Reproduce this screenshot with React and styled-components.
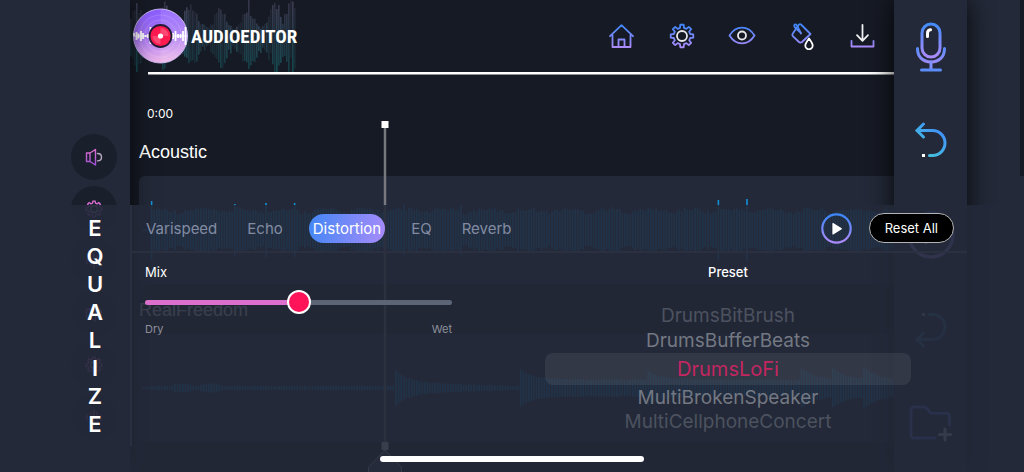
import React, { useState } from 'react';
import styled, { createGlobalStyle } from 'styled-components';

const GlobalStyle = createGlobalStyle`
  body {
    margin: 0;
    background: #161a24;
    color: #ffffff;
    font-family: Inter, "Open Sans", sans-serif;
  }

  * {
    box-sizing: border-box;
  }

  button {
    border: none;
    padding: 0;
    background: none;
    color: inherit;
    font-family: inherit;
    cursor: pointer;
  }
`;

/* Layout */
const Screen = styled.div`
  position: relative;
  display: grid;
  grid-template-columns: 130px 1fr 73px 53px 4px;
  min-height: 100vh;
  overflow: hidden;
`;

const TrackRail = styled.aside`
  display: flex;
  flex-direction: column;
  align-items: center;
  gap: 6px;
  padding: 134px 0 0 57px;
  background: #232938;
  box-shadow: 0 0 22px rgba(0, 0, 0, 0.7);
  z-index: 1;
`;

const Editor = styled.main`
  position: relative;
  min-width: 0;
  background: #161a24;
`;

const ToolRail = styled.aside`
  display: flex;
  flex-direction: column;
  background: #232938;
  box-shadow: 0 0 26px rgba(0, 0, 0, 0.85);
  z-index: 1;
`;

const Gutter = styled.div`
  background: #232938;
`;

const NextPage = styled.div`
  background: linear-gradient(#161a24 176px, #232938 176px);
`;

/* Header */
const Header = styled.header`
  display: flex;
  justify-content: space-between;
  height: 72px;
  padding-right: 18px;
`;

const Logo = styled.a`
  position: relative;
  display: flex;
  align-items: center;
  width: 170px;
  gap: 3px;
  padding-left: 3px;
  color: #ffffff;
  text-decoration: none;
`;

const LogoWave = styled.svg`
  position: absolute;
  top: 0;
  left: 0;
`;

const Disc = styled.svg`
  position: relative;
  flex: none;
`;

const LogoText = styled.span`
  position: relative;
  font-family: "Liberation Sans Narrow", "Roboto Condensed", sans-serif;
  font-size: 19px;
  font-weight: 700;
`;

const Actions = styled.nav`
  display: flex;
  align-items: center;
  gap: 32px;
`;

const IconButton = styled.button`
  display: flex;
  align-items: center;
  justify-content: center;
`;

const RoundButton = styled(IconButton)`
  width: 46px;
  height: 46px;
  flex: none;
  border-radius: 50%;
  background: #1a1f2c;
`;

const ToolButton = styled(IconButton)`
  height: 94px;
  flex: none;
`;

const Rule = styled.div`
  height: 3px;
  margin-left: 18px;
  background: #ffffff;
  border-bottom: 1px solid #8c8f94;
`;

/* Tracks */
const Time = styled.div`
  padding: 29px 0 0 17px;
  font-size: 12px;
  line-height: 20px;
`;

const Tracks = styled.div`
  display: flex;
  flex-direction: column;
  gap: 14px;
  padding: 16px 0 0 9px;
`;

const TrackName = styled.h2`
  margin: 0 0 12px;
  font-family: "Liberation Sans", Arial, sans-serif;
  font-size: 18px;
  font-weight: 400;
  line-height: 24px;
`;

const Clip = styled.div`
  height: 108px;
  border-radius: 6px 0 0 6px;
  background: #232938;
  overflow: hidden;
`;

const Playhead = styled.svg`
  position: absolute;
  top: 120px;
  left: 235px;
`;

/* Equalizer sheet */
const Sheet = styled.section`
  position: absolute;
  inset: 205px 0 0;
  display: grid;
  grid-template-columns: 130px 1fr 57px;
  padding-bottom: 26px;
  background: rgba(35, 41, 56, 0.9);
  z-index: 2;
`;

const SheetTitle = styled.h1`
  display: flex;
  flex-direction: column;
  align-items: center;
  margin: 0;
  padding: 9px 0 0 60px;
  font-size: 22px;
  font-weight: 600;
  line-height: 28px;
`;

const SheetBody = styled.div`
  border-left: 2px solid #292f3f;
`;

const Toolbar = styled.div`
  display: flex;
  align-items: center;
  height: 48px;
  padding: 0 13px 0 10px;
  border-bottom: 2px solid #2a3040;
`;

const Tabs = styled.div`
  display: flex;
  flex: 1;
  gap: 22px;
`;

const Tab = styled.button`
  height: 29px;
  padding: 0 4px;
  border-radius: 15px;
  font-size: 15px;
  color: ${({ $active }) => ($active ? '#ffffff' : '#838ba3')};
  background: ${({ $active }) =>
    $active ? 'linear-gradient(100deg, #4287f5, #a78bfa)' : 'none'};
`;

const PlayButton = styled(IconButton)`
  margin-right: 17px;
`;

const ResetButton = styled.button`
  height: 30px;
  padding: 0 15px;
  border: 1px solid #b4b4b4;
  border-radius: 15px;
  background: #000000;
  font-size: 13px;
`;

const Controls = styled.div`
  display: grid;
  grid-template-columns: 307fr 366fr;
  gap: 93px;
  padding: 9px 56px 0 13px;
`;

const Label = styled.label`
  display: block;
  font-size: 13px;
  line-height: 20px;
`;

const Slider = styled.input`
  display: block;
  width: 100%;
  height: 24px;
  margin: 8px 0 6px;
  appearance: none;
  background: transparent;

  &::-webkit-slider-runnable-track {
    height: 5px;
    border-radius: 3px;
    background: linear-gradient(
      to right,
      #de70cd ${({ value }) => value}%,
      #5b6575 ${({ value }) => value}%
    );
  }

  &::-webkit-slider-thumb {
    appearance: none;
    width: 24px;
    height: 24px;
    margin-top: -10px;
    border: 2px solid #ffffff;
    border-radius: 50%;
    background: #ff1459;
  }
`;

const Range = styled.div`
  display: flex;
  justify-content: space-between;
  font-size: 11px;
  line-height: 18px;
  color: #8d909a;
`;

const Picker = styled.fieldset`
  display: flex;
  flex-direction: column;
  min-width: 0;
  margin: 0;
  padding: 0;
  border: none;
  text-align: center;
`;

const Legend = styled.legend`
  width: 100%;
  margin-bottom: 22px;
  padding: 0;
  font-size: 13px;
  font-weight: 500;
  line-height: 20px;
`;

const levels = {
  far: { color: '#4c525f', size: 19, height: 24 },
  near: { color: '#737883', size: 19, height: 25 },
  picked: { color: '#c32660', size: 20, height: 32 }
};

const Option = styled.label`
  height: ${({ $level }) => levels[$level].height}px;
  border-radius: 8px;
  font-size: ${({ $level }) => levels[$level].size}px;
  line-height: ${({ $level }) => levels[$level].height}px;
  color: ${({ $level }) => levels[$level].color};
  background: ${({ $level }) => ($level === 'picked' ? 'rgba(255, 255, 255, 0.07)' : 'none')};

  input {
    appearance: none;
    width: 0;
    height: 0;
    margin: 0;
  }
`;

const HomeBar = styled.div`
  position: absolute;
  bottom: 10px;
  left: 50%;
  width: 264px;
  height: 6px;
  margin-left: -132px;
  border-radius: 3px;
  background: #ffffff;
  z-index: 3;
`;

const Hidden = styled.svg`
  position: absolute;
`;

/* Drawings */
const Gradients = () => (
  <Hidden width="0" height="0" aria-hidden="true">
    <defs>
      <linearGradient id="cool" gradientUnits="userSpaceOnUse" x1="0" y1="3" x2="0" y2="25">
        <stop offset="0" stopColor="#3f86f8" />
        <stop offset="1" stopColor="#ab8bfb" />
      </linearGradient>
      <linearGradient id="mic" gradientUnits="userSpaceOnUse" x1="0" y1="2" x2="0" y2="44">
        <stop offset="0" stopColor="#3f8cfa" />
        <stop offset="0.8" stopColor="#ab8bfb" />
        <stop offset="1" stopColor="#8190fa" />
      </linearGradient>
      <linearGradient id="arms" gradientUnits="userSpaceOnUse" x1="0" y1="24" x2="0" y2="44">
        <stop offset="0" stopColor="#4a8cfa" />
        <stop offset="1" stopColor="#a58bfb" />
      </linearGradient>
      <linearGradient id="sea" gradientUnits="userSpaceOnUse" x1="30" y1="8" x2="8" y2="34">
        <stop offset="0" stopColor="#418dfb" />
        <stop offset="1" stopColor="#45c8d8" />
      </linearGradient>
      <linearGradient id="pink" gradientUnits="userSpaceOnUse" x1="0" y1="1" x2="0" y2="17">
        <stop offset="0" stopColor="#e070d0" />
        <stop offset="1" stopColor="#a050d8" />
      </linearGradient>
      <linearGradient id="disc" x1="0.4" y1="0" x2="0.5" y2="1">
        <stop offset="0" stopColor="#8a5cff" />
        <stop offset="0.5" stopColor="#a878f5" />
        <stop offset="1" stopColor="#f0b8e8" />
      </linearGradient>
      <linearGradient id="teal" gradientUnits="userSpaceOnUse" x1="0" y1="0" x2="0" y2="72">
        <stop offset="0" stopColor="#4a4560" />
        <stop offset="0.5" stopColor="#2c4656" />
        <stop offset="1" stopColor="#12575c" />
      </linearGradient>
    </defs>
  </Hidden>
);

const Icon = ({ size = 28, box = 28, stroke = 'url(#cool)', width = 1.8, children }) => (
  <svg
    width={size}
    height={size}
    viewBox={`0 0 ${box} ${box}`}
    fill="none"
    stroke={stroke}
    strokeWidth={width}
    strokeLinejoin="round"
    strokeLinecap="round"
    aria-hidden="true"
  >
    {children}
  </svg>
);

const gearPath = (c, outer, inner) => {
  const points = [];
  for (let i = 0; i < 8; i++) {
    [
      [-0.24, inner],
      [-0.15, outer],
      [0.15, outer],
      [0.24, inner]
    ].forEach(([offset, r]) => {
      const a = (i * Math.PI) / 4 + offset;
      points.push(`${(c + r * Math.sin(a)).toFixed(2)} ${(c - r * Math.cos(a)).toFixed(2)}`);
    });
  }
  return `M${points.join('L')}Z`;
};

const HomeIcon = () => (
  <Icon>
    <path d="M2 14.2 13.500 3.200l11.500 11M4.500 13v12h18V13M10.500 25v-7.500h6V25" />
  </Icon>
);

const GearIcon = () => (
  <Icon>
    <path d={gearPath(14, 11.400, 8.400)} />
    <circle cx="14" cy="14" r="5" stroke="#e8e8ec" />
  </Icon>
);

const EyeIcon = () => (
  <Icon>
    <path d="M1.500 13.500C8 3 20 3 26.500 13.500 20 24 8 24 1.500 13.500Z" />
    <circle cx="14" cy="13.500" r="4" stroke="#e8e8ec" />
  </Icon>
);

const FillIcon = () => (
  <Icon>
    <path d="M11 2.500q1-.8 2 0L22.500 12 14 20q-1.500 1.200-3 0L4.800 14.200Q3.800 12.800 4.800 11.500Z" />
    <path d="M13 11.500 9 3.500Q7.500 1.500 6.300 3 5.800 4.200 7 5.500L13 11" />
    <path d="M21 16.500q3.700 5 3.700 7.100a3.700 3.700 0 0 1-7.400 0q0-2.100 3.700-7.100Z" stroke="#ffffff" />
  </Icon>
);

const DownloadIcon = () => (
  <Icon>
    <path d="M3.500 18.800v5.700h22v-5.700" />
    <path d="M14.500 3v15.500M9 13.200l5.500 5.600 5.500-5.600" stroke="#f0f0f2" />
  </Icon>
);

const MicIcon = () => (
  <svg width="32" height="52" viewBox="0 0 32 52" fill="none" strokeWidth="3" strokeLinecap="round">
    <rect x="7" y="3" width="18" height="33" rx="9" stroke="url(#mic)" />
    <path d="M2.500 27.500C2.500 36 8 41 16 41s13.500-5 13.500-13.500" stroke="url(#arms)" />
    <path d="M16 41v7" stroke="#8190fa" />
    <path d="M6.500 49h19" stroke="#5b8cfa" />
    <path d="M12.500 15.500v-3q0-3.500 3-3.700" stroke="#ffffff" />
  </svg>
);

const UndoIcon = ({ flip }) => (
  <svg width="36" height="40" viewBox="0 0 36 40" fill="none" strokeWidth="3" strokeLinecap="round">
    <g transform={flip ? 'translate(0 40) scale(1 -1)' : undefined} opacity={flip ? 0.6 : 1}>
      <path
        d="M10.500 3 4 9.500l6.500 6.500M4 9.500h15.500a12.500 12.500 0 0 1 0 25H16.500"
        stroke="url(#sea)"
      />
      <rect x="9" y="33" width="3" height="3" fill="#ffffff" />
    </g>
  </svg>
);

const FolderIcon = () => (
  <Icon size={44} box={44} width={3}>
    <path
      d="M26 37H5q-3 0-3-3V9q0-3 3-3h10q2 0 3.500 2l2 3q1 1.200 3 1.200h14q3 0 3 3v9"
      stroke="#5070e8"
    />
    <path d="M36 28v11M30.500 33.500h11" stroke="#d8d8e0" />
  </Icon>
);

const PlayIcon = ({ size = 31, fill = '#ffffff' }) => (
  <Icon size={size} width={2}>
    <circle cx="14" cy="14" r="12.800" />
    <path d="M10.800 9.500v9.400l7.600-4.700Z" fill={fill} stroke={fill} strokeWidth="1" />
  </Icon>
);

const SpeakerIcon = () => (
  <Icon size={18} box={18} stroke="url(#pink)" width={1.4}>
    <path d="M1.500 5h3.500v8.500H1.500ZM5 5l5.500-3.500v15.500L5 13.500" />
    <path d="M12.500 5.500q4 0 4 3.700t-4 3.700" stroke="#b9a9bf" />
  </Icon>
);

const SmallGearIcon = () => (
  <Icon size={18} box={18} stroke="url(#pink)" width={1.3}>
    <path d={gearPath(9, 8, 6)} />
    <circle cx="9" cy="9" r="3.400" stroke="#b9a9bf" />
  </Icon>
);

const LevelsIcon = () => (
  <Icon size={18} box={18} stroke="url(#pink)" width={1.3}>
    <path d="M2 7v5M6 4v10M12 4v10M16 7v5" />
    <path d="M9 2v14" stroke="#b9a9bf" />
  </Icon>
);

const noise = i => Math.abs((Math.sin(i * 12.9898) * 43758.5453) % 1);

// tall bars of the first clip, by x
const peaks = { 12: 29, 96: 26, 125: 27, 154: 27, 265: 25, 322: 25, 578: 30, 607: 31 };

const drumLevel = (x, i) => {
  const near = Object.keys(peaks).find(p => Math.abs(p - x) < 1.3);
  if (near) return peaks[near];
  return 15 + 4 * Math.abs(Math.sin(x / 13)) + 4 * noise(i);
};

// hits of the second clip: start, height, level it falls to
const hits = [
  [256, 17, 5],
  [381, 18, 8],
  [506, 18, 8],
  [661, 20, 8],
  [693, 19, 8],
  [724, 20, 8]
];

const hitLevel = (x, i) => {
  const hit = hits.filter(h => h[0] <= x).pop();
  if (!hit) return 1 + (x > 25 && x < 85 ? 3 * Math.abs(Math.sin(x / 9)) : 0.5) + noise(i);
  const [start, height, floor] = hit;
  const fade = floor - (start === 256 ? (x - start) / 35 : 0);
  return Math.max(1.5, fade) + (height - floor) * Math.exp((start - x) / 13) + noise(i);
};

const Wave = ({ level }) => {
  const bars = [];
  for (let i = 0; i < 700; i++) {
    const x = 4 + i * 2.6;
    const h = x < 11 ? 1 : level(x, i);
    bars.push(<rect key={i} x={x.toFixed(1)} y={54 - h} width="1.6" height={h * 2} />);
  }
  return (
    <svg width="100%" height="108" fill="#128fd6" aria-hidden="true">
      {bars}
    </svg>
  );
};

// places where the wave behind the logo swells
const swells = [6, 34, 60, 90, 118, 145, 160];

const LogoMark = () => {
  const bars = [];
  for (let i = 0; i < 83; i++) {
    const x = i * 2;
    const swell = Math.max(...swells.map(s => Math.exp(-Math.pow((x - s) / 7, 2))));
    const up = 6 + swell * (14 + 16 * noise(i + 3)) + 5 * noise(i);
    const down = 8 + swell * (10 + 14 * noise(i + 21)) + 9 * noise(i + 40);
    bars.push(
      <rect key={i} x={x} y={36 - up} width="1.6" height={up + down} opacity={0.25 + 0.65 * noise(i + 9)} />
    );
  }
  return (
    <>
      <LogoWave width="168" height="72" fill="url(#teal)" aria-hidden="true">
        {bars}
      </LogoWave>
      <Disc width="55" height="56" viewBox="0 0 55 56" aria-hidden="true">
        <circle cx="27.5" cy="28" r="27" fill="url(#disc)" stroke="#c9b3f2" />
        <path d="M27.5 1a27 27 0 0 1 0 54Z" fill="#ffffff" opacity="0.12" />
        <circle cx="27.5" cy="28" r="21" fill="none" stroke="#ffffff" opacity="0.15" />
        <circle cx="27.5" cy="28" r="16" fill="none" stroke="#ffffff" opacity="0.15" />
        <path
          d="M1 28v-3M3.500 24v8M5.500 25.500v5M8 23v10M10 25v6M12.500 27v2M15 26v4M17.500 19v17M40 25v6M42.500 23v10M45 26v4M47.500 26v4M50 23v10M52.500 19v18"
          stroke="#ffffff"
          strokeWidth="1.8"
        />
        <path d="M1 28h53" stroke="#ffffff" />
        <circle cx="27.5" cy="28" r="11" fill="#ff1a50" stroke="#241b38" strokeWidth="1.8" />
        <path
          d="M27.500 28V20a8 8 0 0 1 8 8ZM27.500 28v8a8 8 0 0 1-8-8Z"
          fill="#ffffff"
          opacity="0.2"
        />
        <circle cx="27.5" cy="28" r="2.6" fill="#ffffff" />
      </Disc>
    </>
  );
};

const actions = [
  { name: 'Home', Glyph: HomeIcon },
  { name: 'Settings', Glyph: GearIcon },
  { name: 'Preview', Glyph: EyeIcon },
  { name: 'Color', Glyph: FillIcon },
  { name: 'Download', Glyph: DownloadIcon }
];

const tracks = [
  { name: 'Acoustic', level: drumLevel },
  { name: 'RealFreedom', level: hitLevel }
];

const tabs = ['Varispeed', 'Echo', 'Distortion', 'EQ', 'Reverb'];

const presets = [
  'DrumsBitBrush',
  'DrumsBufferBeats',
  'DrumsLoFi',
  'MultiBrokenSpeaker',
  'MultiCellphoneConcert'
];

const Equalizer = () => {
  const [tab, setTab] = useState('Distortion');
  const [mix, setMix] = useState(50);
  const [preset, setPreset] = useState(2);

  const levelOf = i => ['picked', 'near'][Math.abs(i - preset)] || 'far';

  return (
    <Sheet>
      <SheetTitle>
        {'EQUALIZE'.split('').map((letter, i) => (
          <span key={i}>{letter}</span>
        ))}
      </SheetTitle>
      <SheetBody>
        <Toolbar>
          <Tabs role="tablist">
            {tabs.map(name => (
              <Tab
                key={name}
                role="tab"
                aria-selected={name === tab}
                $active={name === tab}
                onClick={() => setTab(name)}
              >
                {name}
              </Tab>
            ))}
          </Tabs>
          <PlayButton aria-label="Play">
            <PlayIcon />
          </PlayButton>
          <ResetButton onClick={() => setMix(50)}>Reset All</ResetButton>
        </Toolbar>
        <Controls>
          <div>
            <Label htmlFor="mix">Mix</Label>
            <Slider
              id="mix"
              type="range"
              value={mix}
              onChange={e => setMix(Number(e.target.value))}
            />
            <Range>
              <span>Dry</span>
              <span>Wet</span>
            </Range>
          </div>
          <Picker>
            <Legend>Preset</Legend>
            {presets.map((name, i) => (
              <Option key={name} $level={levelOf(i)}>
                <input
                  type="radio"
                  name="preset"
                  checked={i === preset}
                  onChange={() => setPreset(i)}
                />
                {name}
              </Option>
            ))}
          </Picker>
        </Controls>
      </SheetBody>
    </Sheet>
  );
};

const App = () => (
  <>
    <GlobalStyle />
    <Gradients />
    <Screen>
      <TrackRail>
        {tracks.map(({ name }) => (
          <React.Fragment key={name}>
            <RoundButton aria-label={`${name} volume`}>
              <SpeakerIcon />
            </RoundButton>
            <RoundButton aria-label={`${name} settings`}>
              <SmallGearIcon />
            </RoundButton>
            <RoundButton aria-label={`${name} levels`}>
              <LevelsIcon />
            </RoundButton>
          </React.Fragment>
        ))}
      </TrackRail>
      <Editor>
        <Header>
          <Logo href="#">
            <LogoMark />
            <LogoText>AUDIOEDITOR</LogoText>
          </Logo>
          <Actions>
            {actions.map(({ name, Glyph }) => (
              <IconButton key={name} aria-label={name}>
                <Glyph />
              </IconButton>
            ))}
          </Actions>
        </Header>
        <Rule />
        <Time>0:00</Time>
        <Tracks>
          {tracks.map(({ name, level }) => (
            <div key={name}>
              <TrackName>{name}</TrackName>
              <Clip>
                <Wave level={level} />
              </Clip>
            </div>
          ))}
        </Tracks>
        <Playhead width="40" height="352" viewBox="0 0 40 352" aria-hidden="true">
          <path d="M20 4v322" stroke="#77797f" strokeWidth="2.5" />
          <rect x="16.5" y="1" width="7" height="7" fill="#ffffff" />
          <rect x="16.5" y="322" width="7" height="8" fill="#ffffff" />
          <path d="M20 330 36.500 347v10h-33v-10Z" fill="#3c4150" stroke="#c8cad0" />
        </Playhead>
      </Editor>
      <ToolRail>
        <ToolButton aria-label="Record">
          <MicIcon />
        </ToolButton>
        <ToolButton aria-label="Undo">
          <UndoIcon />
        </ToolButton>
        <ToolButton aria-label="Play track">
          <PlayIcon size={48} />
        </ToolButton>
        <ToolButton aria-label="Redo">
          <UndoIcon flip />
        </ToolButton>
        <ToolButton aria-label="Add folder">
          <FolderIcon />
        </ToolButton>
      </ToolRail>
      <Gutter />
      <NextPage />
      <Equalizer />
      <HomeBar />
    </Screen>
  </>
);

export default App;
